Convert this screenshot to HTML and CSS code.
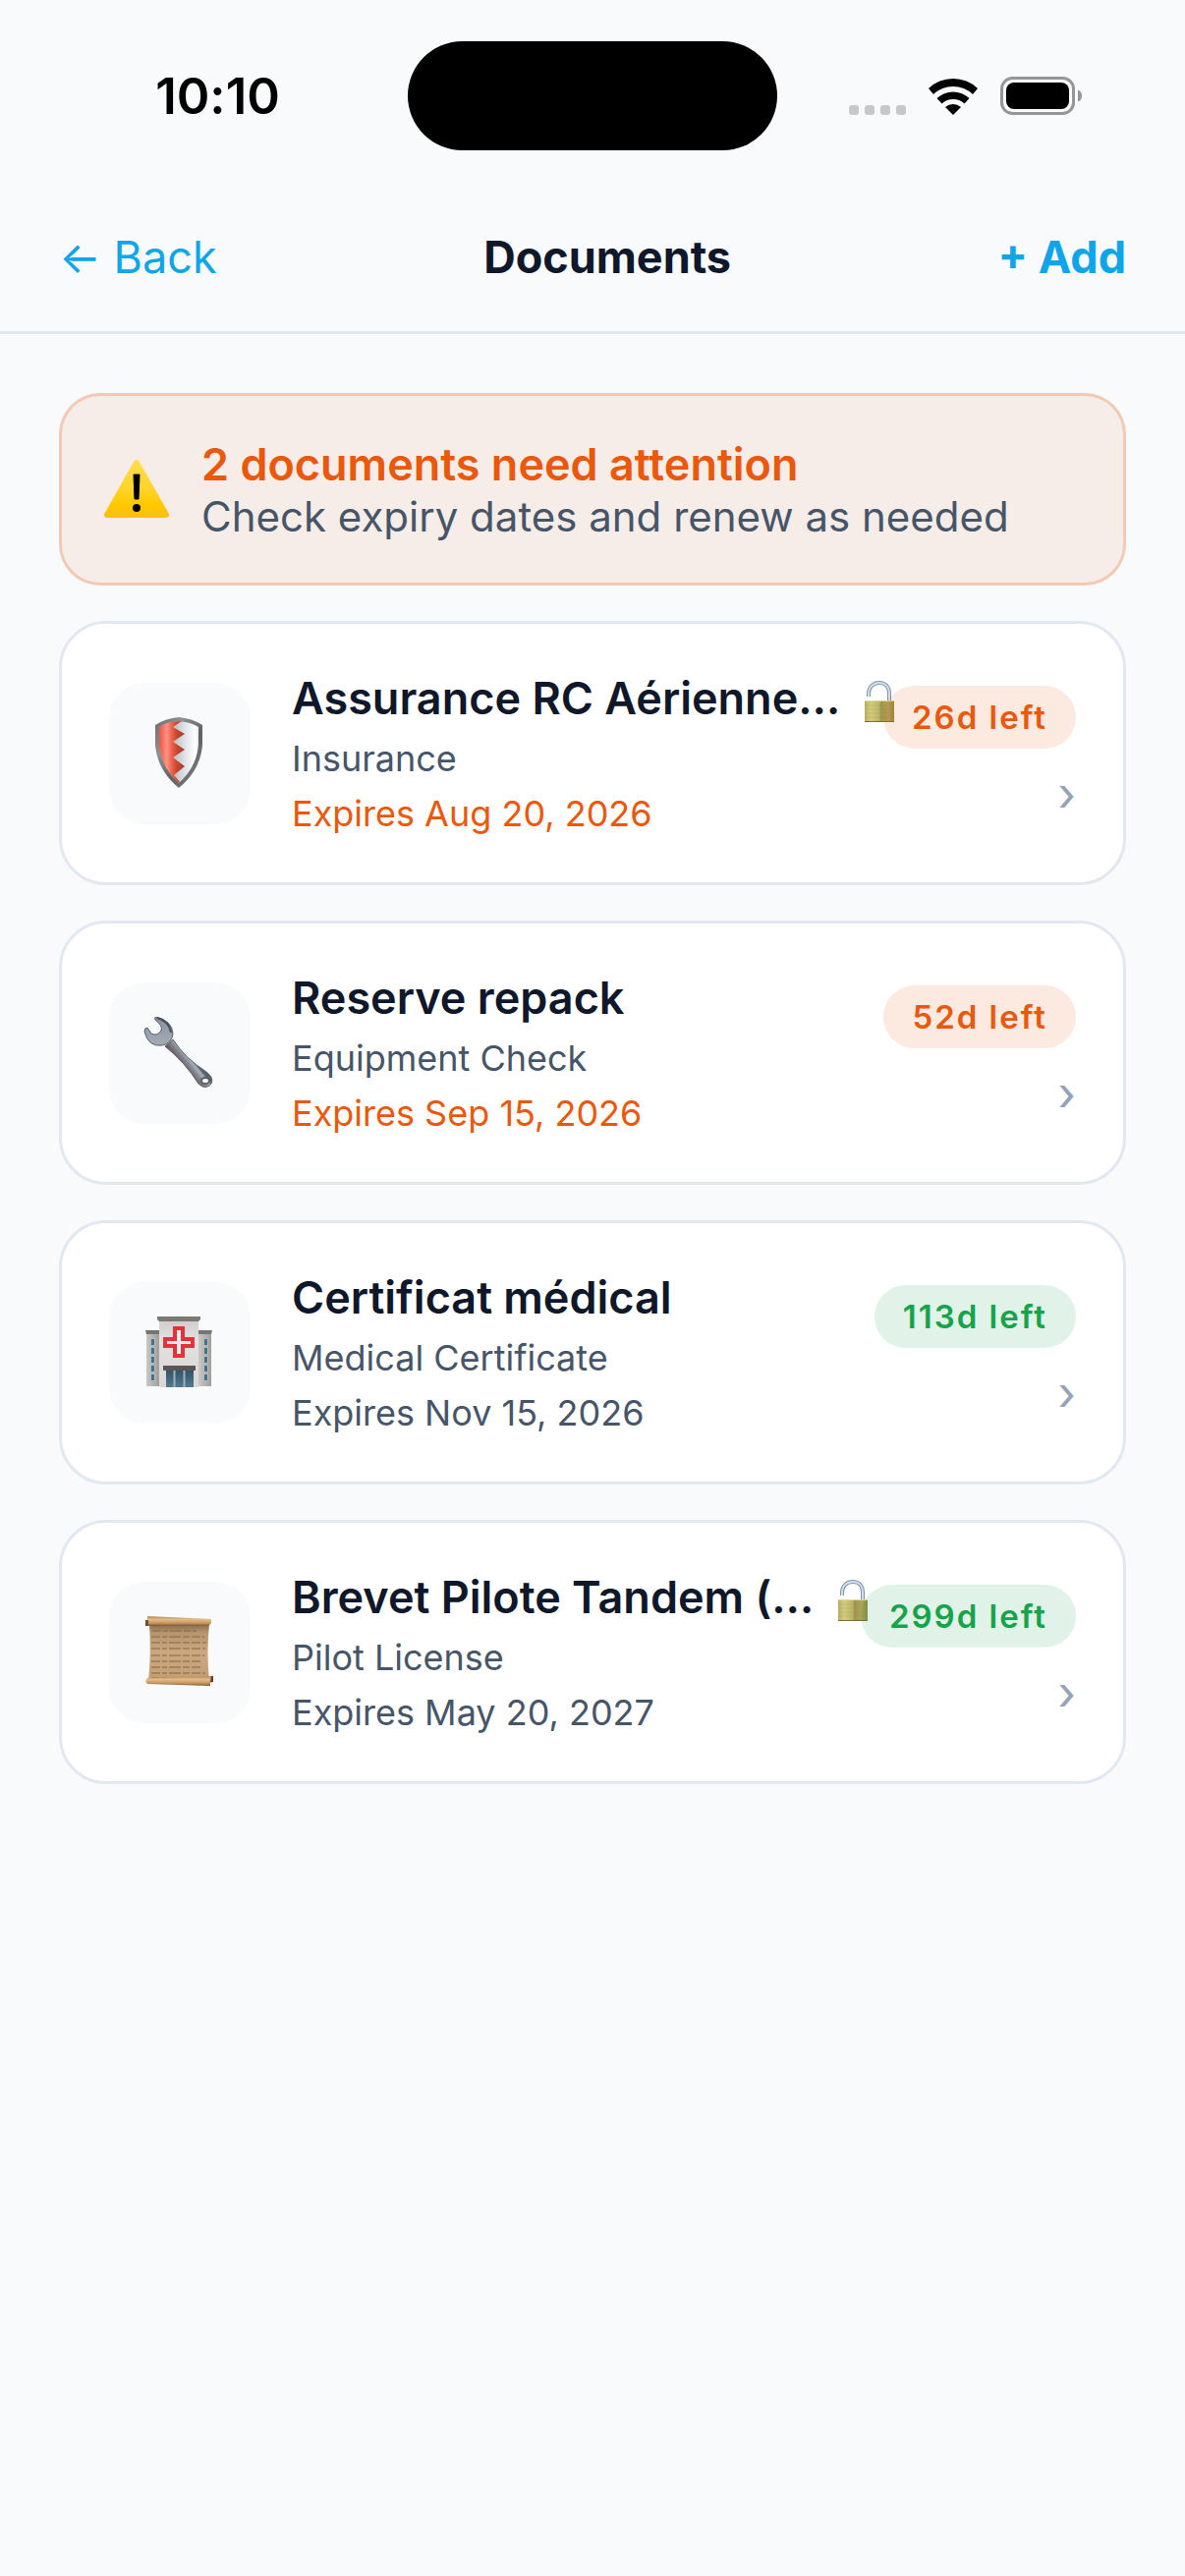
FILE: index.html
```html
<!DOCTYPE html>
<html lang="en">
<head>
  <meta charset="UTF-8" />
  <meta name="viewport" content="width=device-width, initial-scale=1.0"/>
  <title>Documents</title>
  <link rel="stylesheet" href="styles.css">
</head>
<body>
  <!-- gradients and symbols shared by the icons below -->
  <svg class="defs" width="0" height="0" aria-hidden="true">
    <defs>
      <linearGradient id="warnFill" x1="0" y1="0" x2="0" y2="1">
        <stop offset="0" stop-color="#ffdc4a"/>
        <stop offset="0.5" stop-color="#ffd42a"/>
        <stop offset="0.8" stop-color="#ffc800"/>
        <stop offset="1" stop-color="#fcc10a"/>
      </linearGradient>
      <linearGradient id="steelRim" x1="0" y1="0" x2="1" y2="1">
        <stop offset="0" stop-color="#6a6c6d"/>
        <stop offset="0.3" stop-color="#8e9091"/>
        <stop offset="0.6" stop-color="#5f6162"/>
        <stop offset="1" stop-color="#858788"/>
      </linearGradient>
      <linearGradient id="shieldRed" gradientUnits="userSpaceOnUse" x1="4" y1="0" x2="30" y2="0">
        <stop offset="0" stop-color="#ea5540"/>
        <stop offset="0.3" stop-color="#ff9385"/>
        <stop offset="0.5" stop-color="#ee5f4a"/>
        <stop offset="0.7" stop-color="#c4472f"/>
        <stop offset="1" stop-color="#a83c28"/>
      </linearGradient>
      <linearGradient id="shieldWhite" gradientUnits="userSpaceOnUse" x1="17" y1="0" x2="45" y2="0">
        <stop offset="0" stop-color="#b4b8bb"/>
        <stop offset="0.5" stop-color="#e2e6ea"/>
        <stop offset="0.85" stop-color="#ffffff"/>
        <stop offset="1" stop-color="#dfe2e6"/>
      </linearGradient>
      <linearGradient id="wrenchHandle" gradientUnits="userSpaceOnUse" x1="36" y1="46" x2="46" y2="38">
        <stop offset="0" stop-color="#67565a"/>
        <stop offset="0.5" stop-color="#85888f"/>
        <stop offset="0.8" stop-color="#a3b3c2"/>
        <stop offset="1" stop-color="#59616b"/>
      </linearGradient>
      <linearGradient id="wrenchHead" x1="0" y1="0" x2="0" y2="1">
        <stop offset="0" stop-color="#8993a0"/>
        <stop offset="1" stop-color="#a5acb6"/>
      </linearGradient>
      <linearGradient id="wall" x1="0" y1="0" x2="0" y2="1">
        <stop offset="0" stop-color="#cfcecc"/>
        <stop offset="0.3" stop-color="#e2e1df"/>
        <stop offset="1" stop-color="#d9d8d6"/>
      </linearGradient>
      <linearGradient id="wing" x1="0" y1="0" x2="1" y2="0">
        <stop offset="0" stop-color="#c9c8c5"/>
        <stop offset="1" stop-color="#a09e9b"/>
      </linearGradient>
      <linearGradient id="glass" x1="0" y1="0" x2="0" y2="1">
        <stop offset="0" stop-color="#315166"/>
        <stop offset="1" stop-color="#4f7c94"/>
      </linearGradient>
      <linearGradient id="paper" x1="0" y1="0" x2="0" y2="1">
        <stop offset="0" stop-color="#86694a"/>
        <stop offset="0.15" stop-color="#b6946c"/>
        <stop offset="0.5" stop-color="#cba880"/>
        <stop offset="1" stop-color="#c29d74"/>
      </linearGradient>
      <linearGradient id="roll" x1="0" y1="0" x2="0" y2="1">
        <stop offset="0" stop-color="#b88a58"/>
        <stop offset="0.35" stop-color="#e3ba86"/>
        <stop offset="0.7" stop-color="#c99861"/>
        <stop offset="1" stop-color="#7a5a38"/>
      </linearGradient>
      <linearGradient id="brass" x1="0" y1="0" x2="1" y2="0">
        <stop offset="0" stop-color="#b8ae60"/>
        <stop offset="0.2" stop-color="#d3cc80"/>
        <stop offset="0.5" stop-color="#bdb365"/>
        <stop offset="0.55" stop-color="#9f9450"/>
        <stop offset="0.8" stop-color="#b0a65a"/>
        <stop offset="1" stop-color="#958944"/>
      </linearGradient>
      <symbol id="unlock" viewBox="0 -6 30 48">
        <path d="M4 16V13C4 6 9 2 15 2S25 6 25 13V21" fill="none" stroke="#7f93a6" stroke-width="4"/>
        <path d="M4 16V13C4 6 9 2 15 2S25 6 25 13V21" fill="none" stroke="#cfe0f2" stroke-width="2"/>
        <rect x="0" y="20" width="30" height="22" rx="1" fill="url(#brass)"/>
        <path d="M1 25H29M1 29H29M1 33H29M1 37H29" stroke="#8b8040" stroke-opacity="0.2"/>
        <path d="M0 20.500H30" stroke="#dcd692"/>
        <path d="M0 41.500H30" stroke="#7c6f35"/>
      </symbol>
    </defs>
  </svg>

  <div class="status-bar">
    <div class="time">10:10</div>
    <div class="island"></div>
    <div class="indicators">
      <svg class="signal" viewBox="0 0 58 38" aria-hidden="true">
        <g fill="#c7c8ca">
          <rect x="0" y="28" width="10" height="10" rx="3"/>
          <rect x="16" y="28" width="10" height="10" rx="3"/>
          <rect x="32" y="28" width="10" height="10" rx="3"/>
          <rect x="48" y="28" width="10" height="10" rx="3"/>
        </g>
      </svg>
      <svg class="wifi" viewBox="0 0 52 38" aria-hidden="true">
        <path d="M1 11A36 36 0 0 1 51 11L46 17A29 29 0 0 0 6 17Z"/>
        <path d="M9.500 21A24 24 0 0 1 42.500 21L37.500 26.500A17 17 0 0 0 14.500 26.500Z"/>
        <path d="M18 30A12 12 0 0 1 34 30L26 38Z"/>
      </svg>
      <svg class="battery" viewBox="0 0 83 40" aria-hidden="true">
        <rect x="1.500" y="1.500" width="73" height="36" rx="11" fill="none" stroke="#949698" stroke-width="3"/>
        <rect x="6" y="6" width="64" height="27" rx="8"/>
        <path d="M79 13.500Q83 15 83 19.500T79 25.500Z" fill="#949698"/>
      </svg>
    </div>
  </div>

  <header>
    <a class="back" href="#">← Back</a>
    <h1>Documents</h1>
    <button class="add" type="button">+ Add</button>
  </header>

  <main class="container">
    <section class="alert">
      <svg class="alert-icon" viewBox="0 0 68 60" aria-hidden="true">
        <path d="M34 3L64 56H4Z" fill="url(#warnFill)" stroke="url(#warnFill)" stroke-width="6" stroke-linejoin="round"/>
        <path d="M31 15H37L36 40H32Z" stroke="#000" stroke-linejoin="round"/>
        <circle cx="34" cy="49" r="4"/>
      </svg>
      <div>
        <h2>2 documents need attention</h2>
        <p>Check expiry dates and renew as needed</p>
      </div>
    </section>

    <a class="card expiring" href="#">
      <div class="icon">
        <svg viewBox="0 0 72 72" aria-hidden="true">
          <g transform="translate(12 0)">
            <path d="M24 0Q37 1 48 8V28Q46 54 24 72Q2 54 0 28V8Q11 1 24 0Z" fill="url(#steelRim)"/>
            <path d="M24 4Q36 5 44 10V28Q42 51 24 67Q6 51 4 28V10Q12 5 24 4Z" fill="url(#shieldWhite)"/>
            <path d="M27 4L18 10L30 17L18 25L30 33L18 41L30 50L19 59L25 66L24 67Q6 51 4 28V10Q12 4 27 4Z" fill="url(#shieldRed)"/>
          </g>
        </svg>
      </div>
      <div class="info">
        <div class="title-row">
          <h3>Assurance RC Aérienne…</h3>
          <svg class="lock" aria-hidden="true"><use href="#unlock"/></svg>
        </div>
        <p>Insurance</p>
        <p class="expiry">Expires Aug 20, 2026</p>
      </div>
      <div class="side">
        <span class="badge">26d left</span>
        <span class="chevron">›</span>
      </div>
    </a>

    <a class="card expiring" href="#">
      <div class="icon">
        <svg viewBox="0 0 72 72" aria-hidden="true">
          <path d="M22 30L30 23Q42 42 64 56Q72 62 69 68Q63 75 56 68Q42 46 22 30Z" fill="url(#wrenchHandle)" stroke="#5b5f66"/>
          <path d="M13 0Q29 4 30 17Q29 27 19 29Q5 31 1 15Q1 11 4 11L8 17Q14 20 18 14Q20 9 12 3Q11 0 13 0Z" fill="url(#wrenchHead)" stroke="#59616b"/>
          <path d="M14 1Q27 5 28 16" fill="none" stroke="#4a525c" stroke-width="2"/>
          <ellipse cx="63" cy="65" rx="4" ry="3" fill="#f8fafc" stroke="#5d6066" stroke-width="2"/>
        </svg>
      </div>
      <div class="info">
        <div class="title-row">
          <h3>Reserve repack</h3>
        </div>
        <p>Equipment Check</p>
        <p class="expiry">Expires Sep 15, 2026</p>
      </div>
      <div class="side">
        <span class="badge">52d left</span>
        <span class="chevron">›</span>
      </div>
    </a>

    <a class="card" href="#">
      <div class="icon">
        <svg viewBox="0 0 72 72" aria-hidden="true">
          <rect x="3" y="17" width="13" height="54" fill="url(#wing)"/>
          <rect x="56" y="17" width="13" height="54" fill="url(#wing)"/>
          <path d="M2 14H16V18H3ZM56 14H70L69 18H56Z" fill="#777573"/>
          <rect x="16" y="4" width="40" height="68" fill="url(#wall)"/>
          <path d="M14 0H58V3L56 5H16L14 3Z" fill="#7d7a76"/>
          <g fill="#47718a" stroke="#b5bcc0">
            <path d="M7.500 22.500H11.500V29.500H7.500ZM7.500 31.500H11.500V38.500H7.500ZM7.500 40.500H11.500V47.500H7.500ZM7.500 49.500H11.500V56.500H7.500ZM7.500 58.500H11.500V65.500H7.500Z"/>
            <path d="M61.500 22.500H65.500V29.500H61.500ZM61.500 31.500H65.500V38.500H61.500ZM61.500 40.500H65.500V47.500H61.500ZM61.500 49.500H65.500V56.500H61.500ZM61.500 58.500H65.500V65.500H61.500Z"/>
          </g>
          <path d="M32 12H40V23H50V30H40V40H32V30H22V23H32Z" fill="#ececea" stroke="#e3323c" stroke-width="4"/>
          <rect x="23" y="54" width="28" height="18" fill="url(#glass)"/>
          <path d="M31.500 54V72M41.500 54V72" stroke="#a3adb2" stroke-width="2"/>
          <rect x="20" y="50" width="33" height="5" fill="#5b5553"/>
        </svg>
      </div>
      <div class="info">
        <div class="title-row">
          <h3>Certificat médical</h3>
        </div>
        <p>Medical Certificate</p>
        <p class="expiry">Expires Nov 15, 2026</p>
      </div>
      <div class="side">
        <span class="badge">113d left</span>
        <span class="chevron">›</span>
      </div>
    </a>

    <a class="card" href="#">
      <div class="icon">
        <svg viewBox="0 0 72 72" aria-hidden="true">
          <path d="M6 8H67Q64 36 67 66H5Q8 36 6 8Z" fill="url(#paper)"/>
          <g fill="none" stroke="#8a6a45" stroke-opacity="0.55" stroke-dasharray="9 2 5 2 12 2 7 2">
            <path stroke-width="2" d="M9 15H54M8 21H62M8 27H64M8 33H63M8 40H62M8 46H60M8 52H58M8 58H63M8 63H52"/>
          </g>
          <path d="M4 0L69 3V7L66 10L2 10V4H4Z" fill="url(#roll)"/>
          <path d="M2 4H5V10H2Z" fill="#6f5130"/>
          <path d="M4 63L68 61L71 61V67L68 68V71L4 69L2 66Z" fill="url(#roll)"/>
          <path d="M69 61H71V67H68Z" fill="#5f4328"/>
        </svg>
      </div>
      <div class="info">
        <div class="title-row">
          <h3>Brevet Pilote Tandem (…</h3>
          <svg class="lock" aria-hidden="true"><use href="#unlock"/></svg>
        </div>
        <p>Pilot License</p>
        <p class="expiry">Expires May 20, 2027</p>
      </div>
      <div class="side">
        <span class="badge">299d left</span>
        <span class="chevron">›</span>
      </div>
    </a>
  </main>
</body>
</html>
```

FILE: styles.css
```css
:root {
  --bg-color: #f8fafc;
  --card-color: #ffffff;
  --border-color: #e2e8f0;
  --text-color: #0f172a;
  --muted-color: #475569;
  --faint-color: #94a3b8;
  --accent-color: #0ea5e9;
  --warning-color: #ea580c;
  --success-color: #16a34a;
}

* {
  box-sizing: border-box;
}

body {
  margin: 0;
  font-family: Inter, sans-serif;
  font-size: 36px;
  line-height: 44px;
  font-variant-ligatures: none;
  background: var(--bg-color);
  color: var(--text-color);
  min-height: 100vh;
}

h1,
h2,
h3,
p {
  margin: 0;
}

.defs {
  position: absolute;
}

.status-bar {
  display: grid;
  grid-template-columns: 1fr 376px 1fr;
  align-items: center;
  padding: 42px 0 34px;
}

.time {
  padding-left: 28px;
  text-align: center;
  font-size: 51px;
  font-weight: 600;
  line-height: 60px;
  color: #000;
}

.island {
  height: 111px;
  border-radius: 56px;
  background: #000;
}

.indicators {
  display: flex;
  align-items: center;
  justify-content: center;
  gap: 22px;
  padding-right: 32px;
}

.indicators svg {
  flex: none;
}

.signal {
  width: 58px;
  height: 38px;
}

.wifi {
  width: 52px;
  height: 38px;
}

.battery {
  width: 83px;
  height: 40px;
}

header {
  display: flex;
  align-items: center;
  justify-content: space-between;
  padding: 48px 60px;
  border-bottom: 3px solid var(--border-color);
  line-height: 54px;
}

h1 {
  font-size: 45px;
  font-weight: 700;
}

.back,
.add {
  padding: 0;
  border: none;
  background: none;
  font-family: inherit;
  font-size: 45px;
  line-height: inherit;
  color: var(--accent-color);
  text-decoration: none;
  cursor: pointer;
}

.add {
  font-weight: 700;
}

.container {
  display: flex;
  flex-direction: column;
  gap: 36px;
  padding: 60px;
}

.alert {
  display: flex;
  align-items: center;
  gap: 32px;
  padding: 42px;
  border: 3px solid rgba(234, 88, 12, 0.3);
  border-radius: 42px;
  background: rgba(234, 88, 12, 0.08);
  background-clip: padding-box;
}

.alert-icon {
  width: 68px;
  height: 60px;
}

h2 {
  font-size: 45px;
  font-weight: 600;
  line-height: 55px;
  color: var(--warning-color);
}

.alert p {
  font-size: 42px;
  line-height: 51px;
  color: var(--muted-color);
}

.card {
  display: flex;
  align-items: center;
  gap: 42px;
  padding: 48px;
  border: 3px solid var(--border-color);
  border-radius: 48px;
  background: var(--card-color);
  color: var(--muted-color);
  text-decoration: none;
}

.icon {
  display: flex;
  flex: none;
  align-items: center;
  justify-content: center;
  width: 144px;
  height: 144px;
  padding: 0 2px 2px 0;
  border-radius: 36px;
  background: var(--bg-color);
}

.icon svg {
  width: 72px;
  height: 72px;
}

.info {
  display: flex;
  flex: 1;
  flex-direction: column;
  gap: 12px;
  min-width: 0;
}

.title-row {
  display: flex;
  align-items: center;
  gap: 25px;
  white-space: nowrap;
}

h3 {
  font-size: 45px;
  font-weight: 600;
  line-height: 55px;
  color: var(--text-color);
}

.lock {
  flex: none;
  width: 30px;
  height: 48px;
}

.side {
  position: relative;
  display: flex;
  flex: none;
  flex-direction: column;
  align-items: flex-end;
  gap: 18px;
}

.badge {
  padding: 12px 29px;
  border-radius: 32px;
  background: rgba(22, 163, 74, 0.13);
  font-size: 33px;
  font-weight: 600;
  line-height: 40px;
  letter-spacing: 2px;
  color: var(--success-color);
}

.chevron {
  font-size: 48px;
  line-height: 55px;
  color: var(--faint-color);
}

.expiring .expiry {
  color: var(--warning-color);
}

.expiring .badge {
  background: rgba(234, 88, 12, 0.13);
  color: var(--warning-color);
}
```
